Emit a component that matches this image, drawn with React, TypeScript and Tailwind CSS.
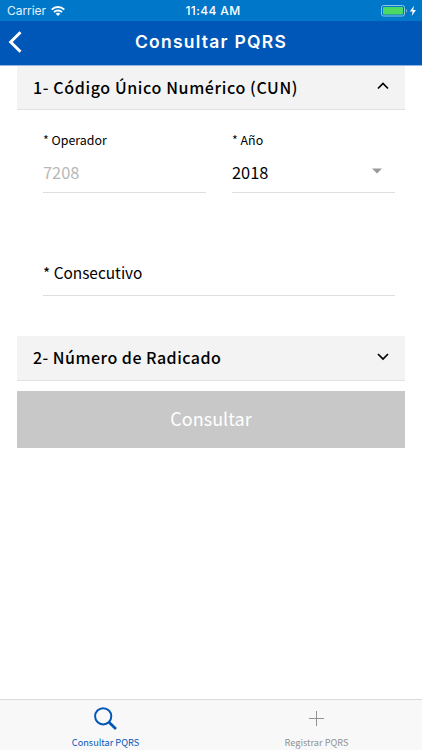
import React from 'react'

function StatusBar() {
    return (
        <div className="grid h-[21px] grid-cols-3 items-center bg-[#0077c8] pl-[7px] pr-[5px] font-['Inter',sans-serif] text-[12px] leading-[21px] text-white">
            <div className="flex items-center gap-[5px]">
                <span className="tracking-[-0.05px] text-white/90">Carrier</span>
                <svg className="h-[10px] w-[14px]" viewBox="0 0 14 10" fill="none" stroke="white" strokeWidth="1.9">
                    <path d="M0.7 3.6C4.2 0.2 9.8 0.2 13.3 3.6" />
                    <path d="M3 6C5.2 3.9 8.8 3.9 11 6" />
                    <path d="M7 10L4.7 7.7C6 6.5 8 6.5 9.3 7.7Z" fill="white" stroke="none" />
                </svg>
            </div>
            <span className="whitespace-nowrap pl-[2px] text-center font-medium tracking-[0.4px]">11:44 AM</span>
            <div className="flex items-center justify-end">
                <svg className="h-[12px] w-[36px]" viewBox="0 0 36 12">
                    <rect x="0.5" y="0.5" width="23" height="10.5" rx="2" fill="none" stroke="#8fc4e9" />
                    <rect x="2" y="2" width="20" height="7.5" rx="0.8" fill="#4cd964" />
                    <path d="M25 4C26.2 4.4 26.2 7.2 25 7.6Z" fill="#8fc4e9" />
                    <path d="M33 0.8L28.8 6.6H31.6L30.7 11L35 5H32.2Z" fill="white" />
                </svg>
            </div>
        </div>
    )
}

function Header() {
    return (
        <header className="grid h-[45px] grid-cols-[40px_1fr_40px] items-center border-b border-[#8db6e4] bg-[#0057b8] text-white">
            <a href="#" aria-label="Volver" className="pb-[2px] pl-[8px]">
                <svg className="h-[22px] w-[14px]" viewBox="0 0 14 22" fill="none" stroke="currentColor" strokeWidth="3">
                    <path d="M12.5 1.2L2.7 11L12.5 20.8" />
                </svg>
            </a>
            <h1 className="whitespace-nowrap pb-[2px] text-center font-['Inter',sans-serif] text-[17.5px] font-semibold leading-[22px] tracking-[1.25px]">Consultar PQRS</h1>
        </header>
    )
}

function AccordionHeader({ title, open, titleClass }: { title: string; open?: boolean; titleClass: string }) {
    return (
        <button className="flex w-full items-center justify-between border-b border-[#e0e2e5] bg-[#f3f3f3] pl-4 pr-[16px] text-left">
            <span className={`whitespace-nowrap pb-[2px] text-[16px] font-medium leading-[24px] ${titleClass}`}>{title}</span>
            <svg className="mb-[3px] h-[8px] w-[12px]" viewBox="0 0 12 8" fill="none" stroke="black" strokeWidth="1.7">
                <path d={open ? 'M1 6.5L6 1.5L11 6.5' : 'M1 1L6 6L11 1'} />
            </svg>
        </button>
    )
}

export default function App() {
    return (
        <div className="flex h-screen flex-col bg-white font-['Noto_Sans_CJK_SC',sans-serif] text-black">
            <StatusBar />
            <Header />
            <main className="flex-1 px-[17px]">
                <section>
                    <div className="grid h-[44px]">
                        <AccordionHeader title="1- Código Único Numérico (CUN)" open titleClass="tracking-[0.62px]" />
                    </div>
                    <div className="h-[226px] pl-[26px] pr-[10px] pt-[20px]">
                        <div className="flex gap-[26px]">
                            <label className="block w-[163px]">
                                <span className="block text-[12.4px] leading-[20px]">* Operador</span>
                                <input type="text" disabled placeholder="7208" className="mt-[12px] block h-[31px] w-full border-b border-[#dedede] pb-[10px] text-[16.4px] leading-[20px] placeholder:text-[#b8b8b8]" />
                            </label>
                            <div className="w-[163px]">
                                <span className="block text-[12.4px] leading-[20px]">* Año</span>
                                <div className="mt-[12px] flex h-[31px] items-start justify-between border-b border-[#dedede] pr-[13px] text-[16.4px] leading-[20px]">
                                    <span>2018</span>
                                    <svg className="mt-[6px] h-[6px] w-[10px]" viewBox="0 0 10 6" fill="#999999">
                                        <path d="M0 0.5H10L5 5.5Z" />
                                    </svg>
                                </div>
                            </div>
                        </div>
                        <div className="mt-[67px] h-[36px] border-b border-[#dedede] text-[15.4px] leading-[24px]">* Consecutivo</div>
                    </div>
                </section>
                <div className="grid h-[45px]">
                    <AccordionHeader title="2- Número de Radicado" titleClass="tracking-[0.48px]" />
                </div>
                <button className="mt-[10px] h-[57px] w-full bg-[#c8c8c8] pb-[3px] text-[18px] leading-[28px] text-white">Consultar</button>
            </main>
            <nav className="grid h-[51px] grid-cols-2 border-t border-[#dadada] bg-[#f8f8f8]">
                <a href="#" className="flex flex-col items-center text-[#0057b8]">
                    <svg className="mt-[7px] h-[24px] w-[24px]" viewBox="0 0 24 24" fill="none" stroke="currentColor">
                        <circle cx="9.2" cy="9.3" r="8.1" strokeWidth="2" />
                        <path d="M15 15.3L22 22" strokeWidth="2.8" />
                    </svg>
                    <span className="mt-[1px] whitespace-nowrap text-[9.2px] leading-[20px]">Consultar PQRS</span>
                </a>
                <a href="#" className="flex flex-col items-center text-[#929292]">
                    <svg className="mt-[7px] h-[24px] w-[24px]" viewBox="0 0 24 24" fill="none" stroke="currentColor">
                        <path d="M11.5 4V19M4 11.5H19" />
                    </svg>
                    <span className="mt-[1px] whitespace-nowrap text-[9.2px] leading-[20px]">Registrar PQRS</span>
                </a>
            </nav>
        </div>
    )
}
